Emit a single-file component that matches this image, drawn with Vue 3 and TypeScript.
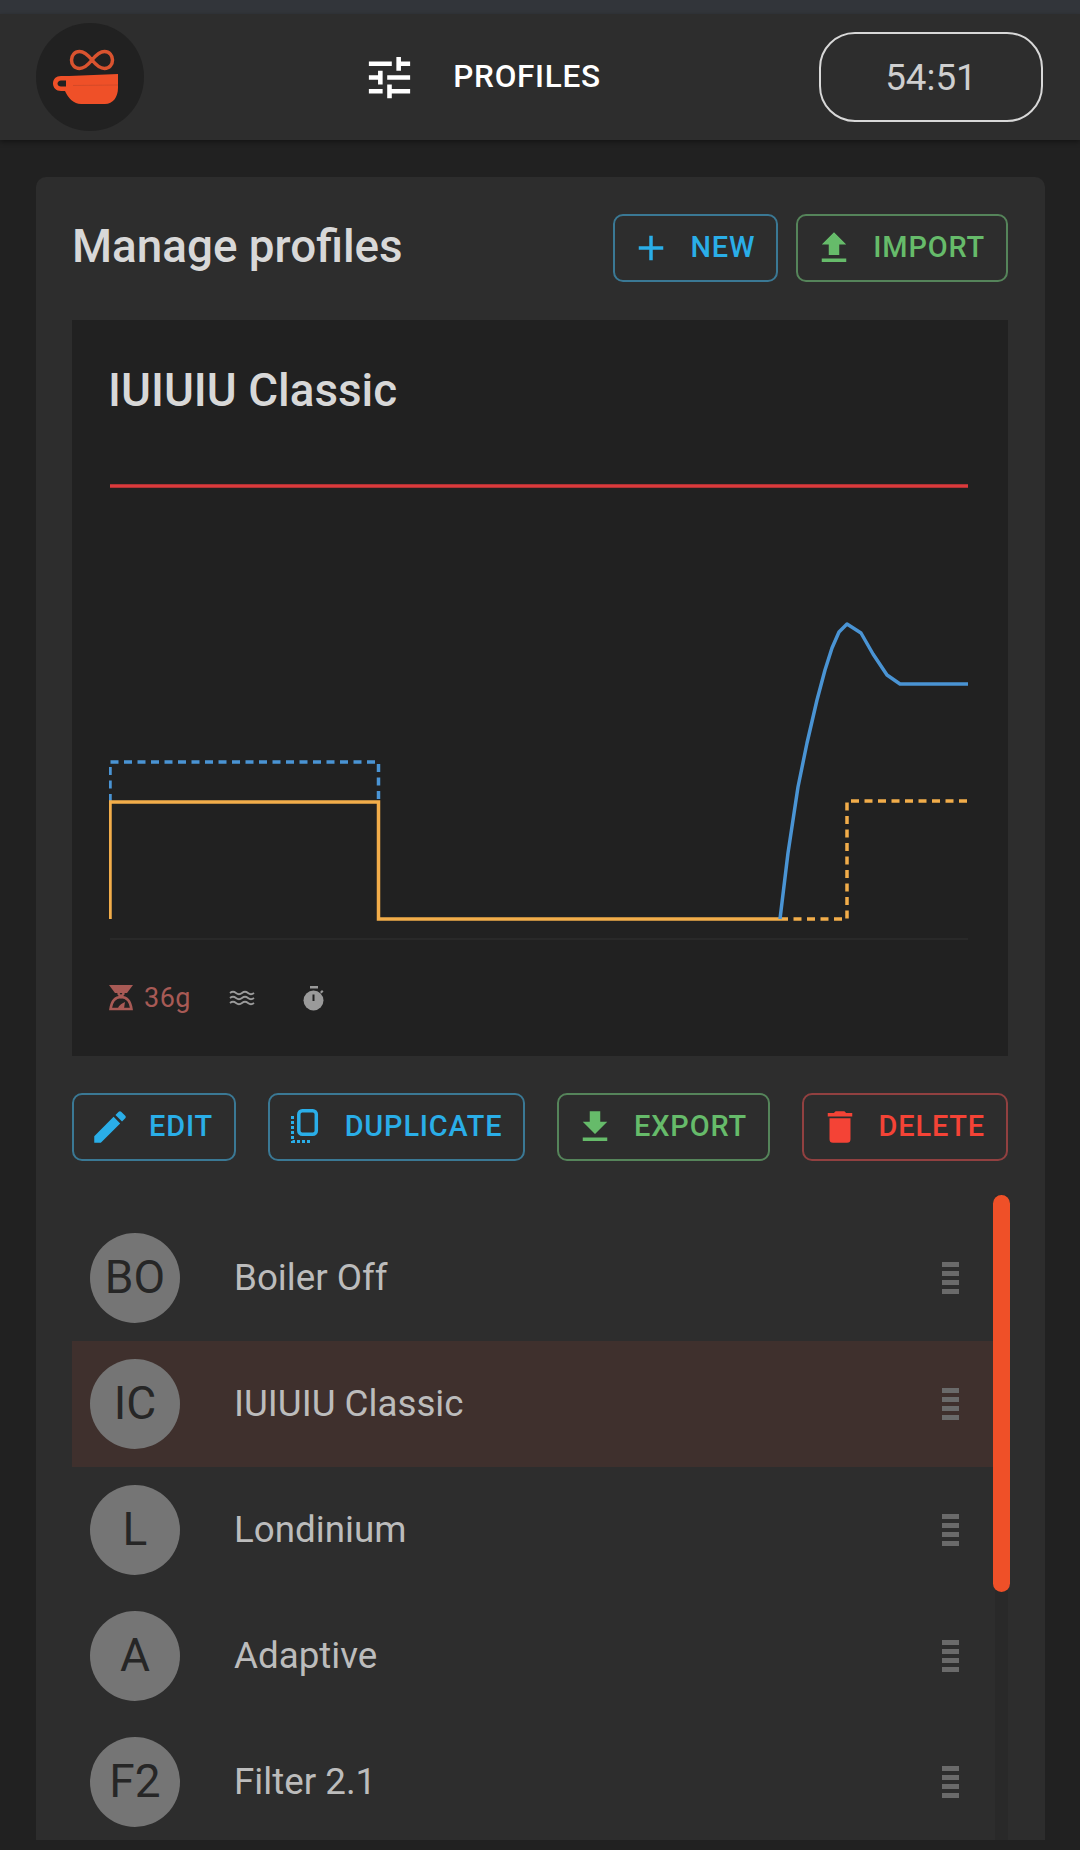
<script setup lang="ts">
interface ActionBtn {
  label: string;
  color: 'blue' | 'green' | 'red';
  icon: string;
}

interface Profile {
  initials: string;
  name: string;
  selected?: boolean;
}

const PLUS = 'M19,13H13V19H11V13H5V11H11V5H13V11H19V13Z'
const UPLOAD = 'M9,16V10H5L12,3L19,10H15V16H9M5,20V18H19V20H5Z'
const PENCIL = 'M20.71,7.04C21.1,6.65 21.1,6 20.71,5.63L18.37,3.29C18,2.9 17.35,2.9 16.96,3.29L15.12,5.12L18.87,8.87M3,17.25V21H6.75L17.81,9.93L14.06,6.18L3,17.25Z'
const DOWNLOAD = 'M5,20H19V18H5M19,9H15V3H9V9H5L12,16L19,9Z'
const TRASH = 'M19,4H15.5L14.5,3H9.5L8.5,4H5V6H19M6,19A2,2 0 0,0 8,21H16A2,2 0 0,0 18,19V7H6V19Z'

const topActions: ActionBtn[] = [
  { label: 'New', color: 'blue', icon: PLUS },
  { label: 'Import', color: 'green', icon: UPLOAD },
]

const profiles: Profile[] = [
  { initials: 'BO', name: 'Boiler Off' },
  { initials: 'IC', name: 'IUIUIU Classic', selected: true },
  { initials: 'L', name: 'Londinium' },
  { initials: 'A', name: 'Adaptive' },
  { initials: 'F2', name: 'Filter 2.1' },
]

const flowCurve = '780,919 788,853 798,787 807,743 817,700 825,670 832,648 839,632 847,624 861,633 873,654 887,675 900,684 968,684'
</script>

<template>
  <div class="app">
    <div class="status-bar"></div>

    <header class="top-bar">
      <div class="logo">
        <svg width="65" height="56" viewBox="54 49 65 56">
          <path class="logo-loop" d="M93,60 C89,55 85,51.500 80.500,51.500 C75.500,51.500 72.500,55.500 72.500,60 C72.500,64.500 75.500,68.500 80.500,68.500 C85,68.500 89,65 93,60 C97,55 101,51.500 105.500,51.500 C110.500,51.500 113.500,55.500 113.500,60 C113.500,64.500 110.500,68.500 105.500,68.500 C101,68.500 97,65 93,60 Z" />
          <path class="logo-cup" fill-rule="evenodd" d="M70,76 L119,74 V88 C119,97 114,104 106,104 H82 C75,104 69,98 66,91 H62 C57,91 54,87.500 54,83.500 C54,79 57,76 62,76 Z M62,80.500 C60,80.500 58.500,82 58.500,83.500 C58.500,85.500 60,86.500 62,86.500 H67 V80.500 Z" />
          <line x1="74" y1="85.500" x2="119" y2="85" stroke="#d44a28" stroke-width="1" />
        </svg>
      </div>

      <div class="page-name">
        <svg class="tune" width="55" height="55" viewBox="0 0 24 24">
          <path fill="currentColor" d="M3,17V19H9V17H3M3,5V7H13V5H3M13,21V19H21V17H13V15H11V21H13M7,9V11H3V13H7V15H9V9H7M21,13V11H11V13H21M15,9H17V7H21V5H17V3H15V9Z" />
        </svg>
        <span>PROFILES</span>
      </div>

      <div class="timer">54:51</div>
    </header>

    <main class="card">
      <div class="card-head">
        <h1>Manage profiles</h1>
        <div class="btn-row">
          <button v-for="a in topActions" :key="a.label" class="btn" :class="a.color">
            <svg width="42" height="42" viewBox="0 0 24 24"><path fill="currentColor" :d="a.icon" /></svg>
            <span>{{ a.label }}</span>
          </button>
        </div>
      </div>

      <section class="chart-panel">
        <h2>IUIUIU Classic</h2>
        <svg class="chart" width="936" height="520" viewBox="72 440 936 520" fill="none">
          <defs>
            <clipPath id="plot"><rect x="109" y="440" width="900" height="520" /></clipPath>
          </defs>
          <line x1="110" y1="486" x2="968" y2="486" stroke="#dc3a3c" stroke-width="3.500" />
          <line x1="110" y1="939" x2="968" y2="939" stroke="#292929" stroke-width="2" />
          <g clip-path="url(#plot)">
            <path d="M110,802 V762 H378.500 V802" stroke="#4a94d4" stroke-width="3.500" stroke-dasharray="8 5.500" />
            <path d="M110,919 V802 H378.500 V919 H780" stroke="#f2ad4a" stroke-width="3.500" />
          </g>
          <path d="M780,919 H847 V801 H968" stroke="#f2ad4a" stroke-width="3.500" stroke-dasharray="8 5.500" />
          <polyline :points="flowCurve" stroke="#4a94d4" stroke-width="3.500" stroke-linejoin="round" />
        </svg>
        <div class="chart-foot">
          <span class="foot-weight">
            <svg width="24" height="26" viewBox="0 0 24 26">
              <path fill="currentColor" d="M0,0 H24 L18,8 H6 Z" />
              <path fill="none" stroke="currentColor" stroke-width="2.500" d="M9,8 L12,12 L15,8 M12,12 C6,12 2.500,17 1.500,24 H22.500 C21.500,17 18,12 12,12 Z" />
              <path fill="currentColor" d="M9,24 C9,21 12,19 16,17 C15.500,20 15,24 15,24 Z" />
            </svg>
            <span>36g</span>
          </span>
          <svg class="foot-waves" width="26" height="16" viewBox="0 0 26 16" fill="none" stroke="#9a9a9a" stroke-width="1.800">
            <path d="M1,3 Q4,0.500 7,3 T13,3 T19,3 T25,3" />
            <path d="M1,8 Q4,5.500 7,8 T13,8 T19,8 T25,8" />
            <path d="M1,13 Q4,10.500 7,13 T13,13 T19,13 T25,13" />
          </svg>
          <svg class="foot-timer" width="22" height="25" viewBox="0 0 22 25">
            <rect x="7" y="0" width="8" height="2.500" fill="#9a9a9a" />
            <path d="M17,6 L19,4 L20.500,5.500 L18.500,7.500 Z" fill="#9a9a9a" />
            <circle cx="10.500" cy="14.500" r="10" fill="#9a9a9a" />
            <rect x="9.500" y="8.500" width="2" height="6.500" fill="#212121" />
          </svg>
        </div>
      </section>

      <div class="action-row">
        <button class="btn blue">
          <svg width="42" height="42" viewBox="0 0 24 24"><path fill="currentColor" :d="PENCIL" /></svg>
          <span>Edit</span>
        </button>
        <button class="btn blue">
          <svg width="42" height="42" viewBox="0 0 42 42" fill="none" stroke="currentColor">
            <rect x="13.800" y="4.750" width="17.500" height="23.500" rx="3.500" stroke-width="3.500" />
            <path d="M7.500,10 V35.500 H27" stroke-width="3" stroke-dasharray="3 2" />
          </svg>
          <span>Duplicate</span>
        </button>
        <button class="btn green">
          <svg width="42" height="42" viewBox="0 0 24 24"><path fill="currentColor" :d="DOWNLOAD" /></svg>
          <span>Export</span>
        </button>
        <button class="btn red">
          <svg width="42" height="42" viewBox="0 0 24 24"><path fill="currentColor" :d="TRASH" /></svg>
          <span>Delete</span>
        </button>
      </div>

      <div class="profile-list">
        <div class="rows">
          <div v-for="p in profiles" :key="p.name" class="row" :class="{ selected: p.selected }">
            <div class="avatar">{{ p.initials }}</div>
            <div class="name">{{ p.name }}</div>
            <div class="handle"><i></i><i></i><i></i><i></i></div>
          </div>
        </div>
        <div class="track"></div>
        <div class="thumb"></div>
      </div>
    </main>
  </div>
</template>

<style scoped>
.app {
  width: 1080px;
  height: 1850px;
  overflow: hidden;
  background: #212121;
  font-family: Roboto, "Liberation Sans", sans-serif;
}

.status-bar { height: 14px; background: #32353a; }

/* Header */
.top-bar {
  height: 126px;
  box-sizing: border-box;
  padding: 0 37px 0 36px;
  display: flex;
  align-items: center;
  justify-content: space-between;
  background: #2d2d2d;
  box-shadow: 0 2px 5px rgba(0, 0, 0, 0.4);
}
.logo {
  width: 108px;
  height: 108px;
  box-sizing: border-box;
  padding-right: 9px;
  border-radius: 50%;
  background: #212121;
  display: flex;
  align-items: center;
  justify-content: center;
}
.logo-loop { fill: none; stroke: #d9532f; stroke-width: 3.5; }
.logo-cup { fill: #ef5028; }

.page-name {
  display: flex;
  align-items: center;
  gap: 36px;
  color: #fff;
  font-size: 31.5px;
  font-weight: 500;
  letter-spacing: 0.7px;
}
.page-name span { padding-bottom: 2px; }
.timer {
  width: 224px;
  height: 90px;
  box-sizing: border-box;
  border: 2px solid #d8d8d8;
  border-radius: 36px;
  display: flex;
  align-items: center;
  justify-content: center;
  color: #cfcfcf;
  font-size: 36.75px;
}

/* Card */
.card {
  margin: 37px 35px 0 36px;
  height: 1663px;
  box-sizing: border-box;
  padding: 37px 37px 0 36px;
  overflow: hidden;
  background: #2d2d2d;
  border-radius: 10px 10px 0 0;
  color: #d6d6d6;
}
.card-head {
  display: flex;
  align-items: center;
  justify-content: space-between;
}
h1 { margin: 0 0 2px; font-size: 45.8px; font-weight: 500; line-height: 66px; color: #d8d8d8; }
.btn-row { display: flex; gap: 18px; }
.action-row { display: flex; justify-content: space-between; margin-top: 37px; }

.btn {
  height: 68px;
  box-sizing: border-box;
  padding: 0 21px 3px 15px;
  display: flex;
  align-items: center;
  gap: 18px;
  background: transparent;
  border: 2px solid;
  border-radius: 10px;
  font-family: inherit;
  font-size: 28.9px;
  font-weight: 500;
  letter-spacing: 0.85px;
  text-transform: uppercase;
}
.btn svg { margin-top: 3px; }
.btn.blue { color: #2aaee8; border-color: #3a7894; }
.btn.green { color: #66bb6a; border-color: #55845a; }
.btn.red { color: #f44336; border-color: #914040; }

/* Chart */
.chart-panel {
  margin-top: 38px;
  height: 736px;
  box-sizing: border-box;
  background: #212121;
}
h2 {
  margin: 0;
  height: 120px;
  box-sizing: border-box;
  padding: 43px 0 0 36px;
  font-size: 45.8px;
  line-height: 56px;
  font-weight: 500;
  color: #d8d8d8;
}
.chart { display: block; }
.chart-foot {
  display: flex;
  align-items: center;
  padding: 22px 0 0 37px;
}
.foot-weight {
  display: flex;
  align-items: center;
  gap: 11px;
  color: #a85a55;
  font-size: 27px;
  letter-spacing: 0.5px;
}
.foot-waves { margin-left: 38px; }
.foot-timer { margin-left: 48px; }

/* List */
.profile-list {
  position: relative;
  margin-top: 34px;
  height: 650px;
  padding-top: 20px;
  box-sizing: border-box;
}
.rows { margin-right: 15px; }
.row {
  height: 126px;
  display: flex;
  align-items: center;
  padding: 0 34px 0 18px;
}
.row.selected { background: #3f302d; }
.avatar {
  width: 90px;
  height: 90px;
  box-sizing: border-box;
  padding-bottom: 2px;
  border-radius: 50%;
  background: #757575;
  color: #262626;
  font-size: 46px;
  display: flex;
  align-items: center;
  justify-content: center;
  flex-shrink: 0;
}
.name {
  margin-left: 54px;
  padding-bottom: 2px;
  flex: 1;
  font-size: 36.75px;
  color: #bcbcbc;
}
.handle { width: 17px; display: flex; flex-direction: column; gap: 4px; }
.handle i { display: block; height: 5px; background: #6a6a6a; }

.track {
  position: absolute;
  top: 0;
  bottom: 0;
  right: 0;
  width: 13px;
  background: #292929;
}
.thumb {
  position: absolute;
  top: 0;
  right: -2px;
  width: 17px;
  height: 397px;
  border-radius: 9px;
  background: #ef5028;
}
</style>

<style>
html, body { background: #212121; }
</style>
